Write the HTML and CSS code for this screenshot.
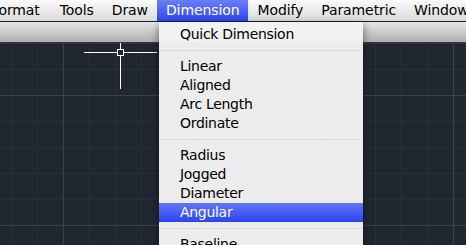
FILE: index.html
```html
<!DOCTYPE html>
<html lang="en">
<head>
    <meta charset="UTF-8">
    <title>Dimension menu</title>
    <link rel="stylesheet" href="styles.css">
</head>
<body>
    <!-- barra dei menu -->
    <div class="menubar">
        <span class="menubar-item first">Format</span>
        <span class="menubar-item">Tools</span>
        <span class="menubar-item">Draw</span>
        <span class="menubar-item active">Dimension</span>
        <span class="menubar-item">Modify</span>
        <span class="menubar-item">Parametric</span>
        <span class="menubar-item">Window</span>
    </div>
    <div class="toolbar"></div>
    <div class="canvas">
        <svg class="cursor" width="80" height="50" viewBox="0 0 80 50">
            <line x1="0" y1="9.5" x2="73" y2="9.5" stroke="#fff" stroke-width="1"/>
            <line x1="36.5" y1="0" x2="36.5" y2="46" stroke="#fff" stroke-width="1"/>
            <rect x="33.5" y="6.5" width="6" height="6" fill="#222833" stroke="#fff" stroke-width="1"/>
        </svg>
    </div>

    <!-- menu a tendina -->
    <div class="dropdown">
        <div class="menu-item">Quick Dimension</div>
        <div class="menu-sep"></div>
        <div class="menu-item">Linear</div>
        <div class="menu-item">Aligned</div>
        <div class="menu-item">Arc Length</div>
        <div class="menu-item">Ordinate</div>
        <div class="menu-sep"></div>
        <div class="menu-item">Radius</div>
        <div class="menu-item">Jogged</div>
        <div class="menu-item">Diameter</div>
        <div class="menu-item selected">Angular</div>
        <div class="menu-sep"></div>
        <div class="menu-item">Baseline</div>
    </div>
</body>
</html>
```

FILE: styles.css
```css
body {
    margin: 0;
    width: 466px;
    height: 245px;
    overflow: hidden;
    position: relative;
    font-family: "DejaVu Sans", sans-serif;
    font-size: 14px;
    letter-spacing: -0.3px;
    color: #000;
    background-color: #222833;
}
.menubar {
    display: flex;
    height: 21px;
    border-bottom: 1px solid #1e1e1e;
    background: linear-gradient(#fbfbfb, #dadada);
    white-space: nowrap;
    letter-spacing: -0.1px;
}
.menubar-item {
    padding: 0 9px;
    line-height: 21px;
}
.menubar-item.first {
    margin-left: -18px;
    padding-right: 11px;
}
.menubar-item.active {
    color: #fff;
    background: linear-gradient(#6a7ff8, #2c46f2);
}
.toolbar {
    height: 20px;
    background: linear-gradient(#e6e6e6, #aeaeae);
    border-bottom: 1px solid #3a3a3a;
}
.canvas {
    position: relative;
    height: 202px;
    background-color: #212731;
    background-image:
        linear-gradient(90deg, #3b414c 1px, transparent 1px),
        linear-gradient(#3b414c 1px, transparent 1px),
        linear-gradient(90deg, #292f3a 1px, transparent 1px),
        linear-gradient(#292f3a 1px, transparent 1px);
    background-size: 130px 130px, 130px 130px, 26px 26px, 26px 26px;
    background-position: 63px 52px, 63px 52px, 11px 0px, 11px 0px;
}
.cursor {
    position: absolute;
    left: 84px;
    top: 0;
}
.dropdown {
    position: absolute;
    left: 159px;
    top: 22px;
    width: 204px;
    padding-top: 3px;
    background-color: rgba(243, 243, 243, 0.97);
    box-shadow: 0 3px 8px rgba(0, 0, 0, 0.5);
}
.menu-item {
    height: 19px;
    line-height: 19px;
    padding-left: 21px;
    white-space: nowrap;
}
.menu-item.selected {
    color: #fff;
    background: linear-gradient(#6277f7, #2b44f1);
}
.menu-sep {
    height: 1px;
    margin: 6px 1px;
    background-color: #d8d8d8;
}
```
